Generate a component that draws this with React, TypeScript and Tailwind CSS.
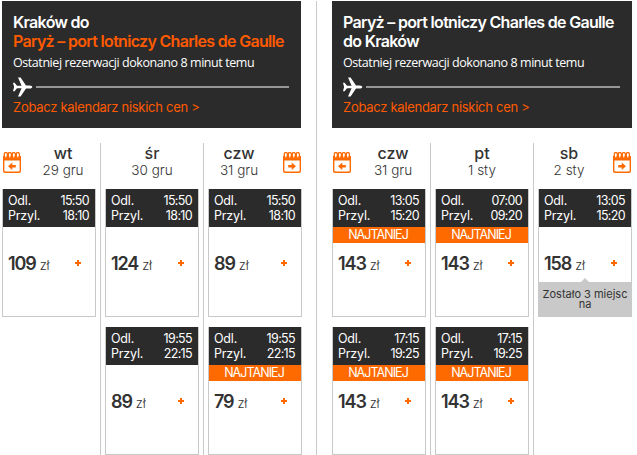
import React from 'react';

interface Flight {
  dep: string;
  arr: string;
  price: number;
  cheapest?: boolean;
  seats?: string;
}

interface Day {
  name: string;
  date: string;
  flights: Flight[];
}

interface RouteProps {
  title: React.ReactNode;
  days: Day[];
  wide?: boolean;
}

const outbound: Day[] = [
  { name: 'wt', date: '29 gru', flights: [{ dep: '15:50', arr: '18:10', price: 109 }] },
  {
    name: 'śr',
    date: '30 gru',
    flights: [
      { dep: '15:50', arr: '18:10', price: 124 },
      { dep: '19:55', arr: '22:15', price: 89 },
    ],
  },
  {
    name: 'czw',
    date: '31 gru',
    flights: [
      { dep: '15:50', arr: '18:10', price: 89 },
      { dep: '19:55', arr: '22:15', price: 79, cheapest: true },
    ],
  },
];

const inbound: Day[] = [
  {
    name: 'czw',
    date: '31 gru',
    flights: [
      { dep: '13:05', arr: '15:20', price: 143, cheapest: true },
      { dep: '17:15', arr: '19:25', price: 143, cheapest: true },
    ],
  },
  {
    name: 'pt',
    date: '1 sty',
    flights: [
      { dep: '07:00', arr: '09:20', price: 143, cheapest: true },
      { dep: '17:15', arr: '19:25', price: 143, cheapest: true },
    ],
  },
  {
    name: 'sb',
    date: '2 sty',
    flights: [{ dep: '13:05', arr: '15:20', price: 158, seats: 'Zostało 3 miejsc na' }],
  },
];

const Plane = () => (
  <svg width="20" height="20" viewBox="0 0 20 20" fill="#fff" className="shrink-0">
    <path d="M0 5.8h1.6l2.4 2.9h4.6L5 0.5h2.6L13 8.4h3.6c1.7 0 2.7.8 2.7 1.6s-1 1.6-2.7 1.6H13l-5.4 7.9H5l3.6-8.2H4l-2.4 2.9H0L1.1 10z" />
  </svg>
);

const CalendarIcon = ({ next }: { next?: boolean }) => (
  <svg width="18" height="21" viewBox="0 0 18 21" fill="none" className="shrink-0">
    <path d="M0 4h18v15a2 2 0 0 1-2 2H2a2 2 0 0 1-2-2z" fill="#ff6a00" />
    <path d="M1.4 8.5h15.2v10a1.1 1.1 0 0 1-1.1 1.1h-13a1.1 1.1 0 0 1-1.1-1.1z" fill="#fff" />
    <path
      d="M1.3 5V2a1.5 1.5 0 0 1 3 0V5M5.3 5V2a1.5 1.5 0 0 1 3 0V5M9.3 5V2a1.5 1.5 0 0 1 3 0V5M13.3 5V2a1.5 1.5 0 0 1 3 0V5"
      stroke="#ff6a00"
      strokeWidth="1.3"
    />
    <path d="M2.8 2v3M6.8 2v3M10.8 2v3M14.8 2v3" stroke="#fff" strokeWidth="1.1" strokeLinecap="round" />
    <path
      d={next ? 'M5.2 13h3.5v-2.6l4.3 3.8-4.3 3.8v-2.4H5.2z' : 'M12.8 13H9.3v-2.6L5 14.2 9.3 18v-2.4h3.5z'}
      fill="#ff6a00"
    />
  </svg>
);

const Card = ({ flight }: { flight: Flight }) => (
  <div className="flex flex-col h-32 border border-t-0 border-[#c9c9c9]">
    <div className="h-[38px] shrink-0 bg-[#2b2b2b] text-white pl-[5px] pr-[6px] pt-[4px] text-[12.5px] leading-[15px]">
      <div className="flex justify-between">
        <span className="tracking-[-0.2px]">Odl.</span>
        <span className="tracking-[-0.65px]">{flight.dep}</span>
      </div>
      <div className="flex justify-between">
        <span className="tracking-[-0.2px]">Przyl.</span>
        <span className="tracking-[-0.65px]">{flight.arr}</span>
      </div>
    </div>
    <div className="h-4 shrink-0">
      {flight.cheapest && (
        <div className="h-4 pr-[2px] bg-[#ff6a00] text-white text-center text-[12.5px] leading-4 tracking-[-0.95px]">NAJTANIEJ</div>
      )}
    </div>
    <div className="flex items-baseline h-[39px] shrink-0 pl-[5px] pr-[14px] pt-[7px] leading-7 text-[#333]">
      <span className="text-[18px] font-semibold tracking-[-1.1px]">{flight.price}</span>
      <span className="ml-1 text-[13px] font-light tracking-[-0.2px]">zł</span>
      <svg width="6" height="6" viewBox="0 0 6 6" className="ml-auto mt-[10px] self-start">
        <path d="M2 0h2v2h2v2H4v2H2V4H0V2h2z" fill="#ff6a00" shapeRendering="crispEdges" />
      </svg>
    </div>
    {flight.seats && (
      <div className="relative grow bg-[#c9c9c9] text-[#333] text-center text-[11px] leading-[10px] pt-[7px]">
        <svg width="8" height="4" viewBox="0 0 8 4" className="absolute -top-[4px] left-[42px]">
          <path d="M4 0l4 4H0z" fill="#c9c9c9" />
        </svg>
        {flight.seats}
      </div>
    )}
  </div>
);

const Route: React.FC<RouteProps> = ({ title, days, wide }) => (
  <section className="w-[300px] shrink-0">
    <header className={`${wide ? 'w-[300px]' : 'w-[299px]'} h-[127px] bg-[#2b2b2b] text-white pl-[11px] pr-3 pt-3`}>
      <h2 className="h-[38px] text-[16px] leading-[19px] font-semibold tracking-[-0.69px] whitespace-nowrap">{title}</h2>
      <p className="mt-[3px] font-['Open_Sans',sans-serif] text-[12.5px] leading-[18px] tracking-[-0.43px] whitespace-nowrap">
        Ostatniej rezerwacji dokonano 8 minut temu
      </p>
      <div className="flex items-center gap-[3px] mt-[5px]">
        <Plane />
        <div className="grow h-[2px] bg-[#979797]" />
      </div>
      <a className="block mt-px text-[13px] leading-[18px] tracking-[-0.28px] text-[#ff5a00] whitespace-nowrap">
        Zobacz kalendarz niskich cen &gt;
      </a>
    </header>
    <div className="flex mt-[15px] h-[312px]">
      {days.map((day, i) => (
        <React.Fragment key={day.date}>
          {i > 0 && <div className="w-px mx-1 shrink-0 bg-[#c9c9c9]" />}
          <div className="w-[94px] shrink-0">
            <div className="flex h-[46px]">
              {i === 0 && (
                <div className="w-7 pl-px pt-[9px]">
                  <CalendarIcon />
                </div>
              )}
              <div className="grow text-center text-[#333]">
                <div className="text-[16px] leading-[20px] font-medium">{day.name}</div>
                <div className="text-[13.5px] leading-[15px] font-light">{day.date}</div>
              </div>
              {i === 2 && (
                <div className="w-8 pl-[13px] pt-[9px]">
                  <CalendarIcon next />
                </div>
              )}
            </div>
            <div className="flex flex-col gap-[10px]">
              {day.flights.map((flight) => (
                <Card key={flight.dep} flight={flight} />
              ))}
            </div>
          </div>
        </React.Fragment>
      ))}
    </div>
  </section>
);

export default function App() {
  return (
    <main className="flex w-[637px] h-[455px] pl-[2px] pt-px bg-white overflow-hidden font-['Inter',sans-serif]">
      <Route
        title={
          <>
            Kraków do
            <br />
            <span className="text-[#ff5a00]">Paryż – port lotniczy Charles de Gaulle</span>
          </>
        }
        days={outbound}
      />
      <div className="w-px ml-[14px] mr-[15px] shrink-0 bg-[#c9c9c9]" />
      <Route
        title={
          <>
            Paryż – port lotniczy Charles de Gaulle
            <br />
            do Kraków
          </>
        }
        days={inbound}
        wide
      />
    </main>
  );
}
